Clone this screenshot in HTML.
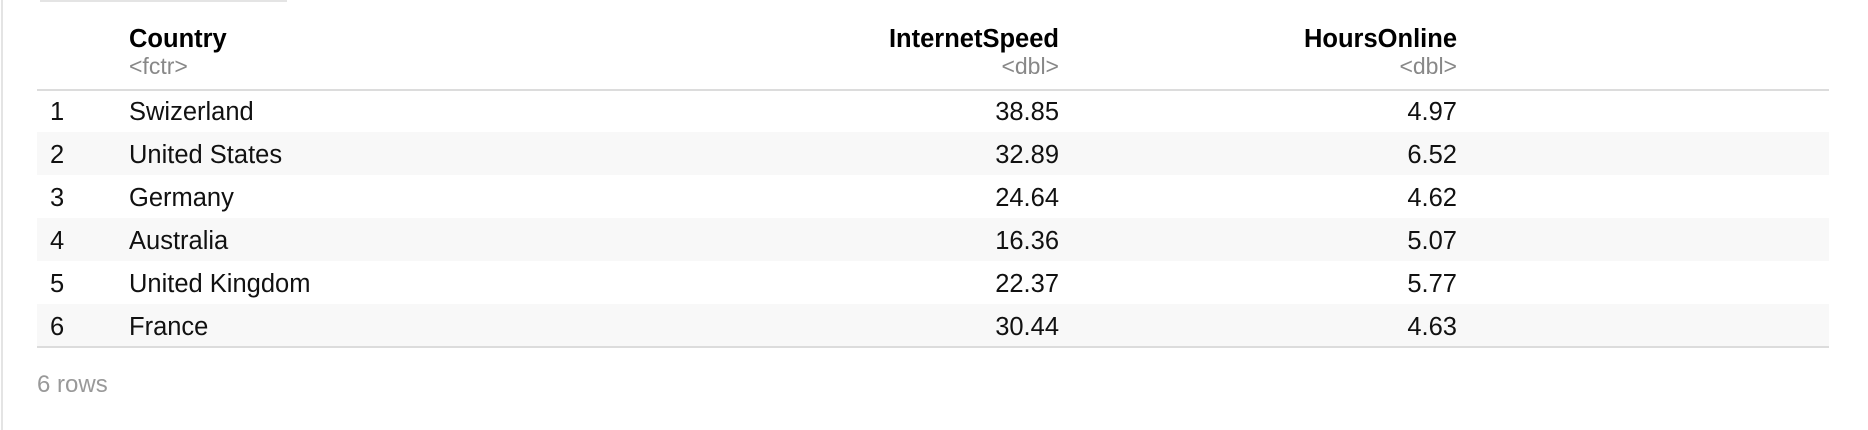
<!DOCTYPE html>
<html><head><style>
html,body{margin:0;padding:0;background:#fff;width:1868px;height:430px;overflow:hidden;font-family:"Liberation Sans",sans-serif;}
.lb{position:absolute;left:1px;top:0;width:2px;height:430px;background:#e4e4e4;}
.tab{position:absolute;left:40px;top:0;width:247px;height:2px;background:#e4e4e4;}
.t{position:absolute;left:37px;width:1792px;}
.hdr{position:absolute;top:0;height:89px;width:100%;border-bottom:2px solid #dcdcdc;}
.row{position:absolute;height:43px;width:100%;font-size:25.5px;color:#111;}
.row.s{background:#f8f8f8;}
.c{position:absolute;top:2px;line-height:43px;white-space:nowrap;}
.h{position:absolute;font-weight:bold;font-size:25.5px;color:#000;top:24px;line-height:30px;white-space:nowrap;}
.sub{position:absolute;font-size:23px;color:#888;top:52px;line-height:28px;white-space:nowrap;}
.r1{right:calc(1792px - 1022px);text-align:right;}
.r2{right:calc(1792px - 1420px);text-align:right;}
.bot{position:absolute;top:346px;height:2px;width:100%;background:#dcdcdc;}
.foot{position:absolute;left:37px;top:370px;font-size:24px;color:#999;line-height:30px;}
</style></head><body>
<div class="lb"></div><div class="tab"></div>
<div class="t" style="top:0;height:350px;">
 <div class="hdr">
  <div class="h" style="left:92px">Country</div>
  <div class="sub" style="left:92px">&lt;fctr&gt;</div>
  <div class="h r1">InternetSpeed</div>
  <div class="sub r1">&lt;dbl&gt;</div>
  <div class="h r2">HoursOnline</div>
  <div class="sub r2">&lt;dbl&gt;</div>
 </div>
 <div class="row" style="top:89px"><div class="c" style="left:13px">1</div><div class="c" style="left:92px">Swizerland</div><div class="c r1">38.85</div><div class="c r2">4.97</div></div>
 <div class="row s" style="top:132px"><div class="c" style="left:13px">2</div><div class="c" style="left:92px">United States</div><div class="c r1">32.89</div><div class="c r2">6.52</div></div>
 <div class="row" style="top:175px"><div class="c" style="left:13px">3</div><div class="c" style="left:92px">Germany</div><div class="c r1">24.64</div><div class="c r2">4.62</div></div>
 <div class="row s" style="top:218px"><div class="c" style="left:13px">4</div><div class="c" style="left:92px">Australia</div><div class="c r1">16.36</div><div class="c r2">5.07</div></div>
 <div class="row" style="top:261px"><div class="c" style="left:13px">5</div><div class="c" style="left:92px">United Kingdom</div><div class="c r1">22.37</div><div class="c r2">5.77</div></div>
 <div class="row s" style="top:304px"><div class="c" style="left:13px">6</div><div class="c" style="left:92px">France</div><div class="c r1">30.44</div><div class="c r2">4.63</div></div>
 <div class="bot"></div>
</div>
<div class="foot">6 rows</div>
</body></html>
